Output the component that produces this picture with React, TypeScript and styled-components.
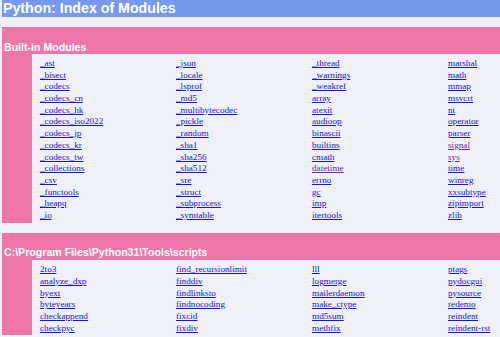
import React from "react";
import styled, { createGlobalStyle } from "styled-components";

const Global = createGlobalStyle`
  html, body {
    margin: 0;
    padding: 0;
    background: #f0f0f8;
    overflow: hidden;
    height: 337px;
  }
`;

const Page = styled.div`
  padding-left: 2px;
  width: 498px;
  overflow: hidden;
  font-family: "Liberation Serif", "Times New Roman", serif;
`;

const TitleBar = styled.div`
  height: 17px;
  background: #7799ee;
  color: #ffffff;
  font-family: "Liberation Sans", Arial, Helvetica, sans-serif;
  font-weight: bold;
  font-size: 14.2px;
  line-height: 17px;
  padding-left: 1px;
  white-space: nowrap;
`;

const Section = styled.section`
  margin-top: 10px;
`;

const SectionHeader = styled.div`
  height: 27px;
  box-sizing: border-box;
  background: #ee77aa;
  color: #ffffff;
  font-family: "Liberation Sans", Arial, Helvetica, sans-serif;
  font-weight: bold;
  font-size: 10.6px;
  line-height: 12px;
  display: flex;
  align-items: flex-end;
  padding: 0 0 1.5px 2px;
  white-space: nowrap;
`;

const SectionBody = styled.div`
  display: flex;
`;

const Strip = styled.div`
  width: 30px;
  flex: none;
  background: #ee77aa;
`;

const Content = styled.div<{ $top: number }>`
  flex: 1;
  padding: ${(p) => p.$top}px 0 1px 8px;
  display: grid;
  grid-template-columns: repeat(4, 136px);
`;

const Column = styled.div`
  display: flex;
  flex-direction: column;
  min-width: 0;
`;

const ModLink = styled.a<{ $visited?: boolean }>`
  font-size: 9.2px;
  line-height: 11.7px;
  height: 11.7px;
  color: ${(p) => (p.$visited ? "#6a2a9b" : "#1515e6")};
  text-decoration: underline;
  white-space: nowrap;
  align-self: flex-start;
`;

const visited = new Set(["datetime", "signal", "sys"]);

const builtin: string[][] = [
  ["_ast", "_bisect", "_codecs", "_codecs_cn", "_codecs_hk", "_codecs_iso2022", "_codecs_jp", "_codecs_kr", "_codecs_tw", "_collections", "_csv", "_functools", "_heapq", "_io"],
  ["_json", "_locale", "_lsprof", "_md5", "_multibytecodec", "_pickle", "_random", "_sha1", "_sha256", "_sha512", "_sre", "_struct", "_subprocess", "_symtable"],
  ["_thread", "_warnings", "_weakref", "array", "atexit", "audioop", "binascii", "builtins", "cmath", "datetime", "errno", "gc", "imp", "itertools"],
  ["marshal", "math", "mmap", "msvcrt", "nt", "operator", "parser", "signal", "sys", "time", "winreg", "xxsubtype", "zipimport", "zlib"],
];

const scripts: string[][] = [
  ["2to3", "analyze_dxp", "byext", "byteyears", "checkappend", "checkpyc"],
  ["find_recursionlimit", "finddiv", "findlinksto", "findnocoding", "fixcid", "fixdiv"],
  ["lll", "logmerge", "mailerdaemon", "make_ctype", "md5sum", "methfix"],
  ["ptags", "pydocgui", "pysource", "redemo", "reindent", "reindent-rst"],
];

function ModuleSection({ title, cols, top }: { title: string; cols: string[][]; top: number }) {
  return (
    <Section>
      <SectionHeader>{title}</SectionHeader>
      <SectionBody>
        <Strip />
        <Content $top={top}>
          {cols.map((col, i) => (
            <Column key={i}>
              {col.map((m) => (
                <ModLink key={m} href={`#${m}`} $visited={visited.has(m)}>
                  {m}
                </ModLink>
              ))}
            </Column>
          ))}
        </Content>
      </SectionBody>
    </Section>
  );
}

export default function App() {
  return (
    <>
      <Global />
      <Page>
        <TitleBar>Python: Index of Modules</TitleBar>
        <ModuleSection title="Built-in Modules" cols={builtin} top={4} />
        <ModuleSection title="C:\Program Files\Python31\Tools\scripts" cols={scripts} top={4.5} />
      </Page>
    </>
  );
}
